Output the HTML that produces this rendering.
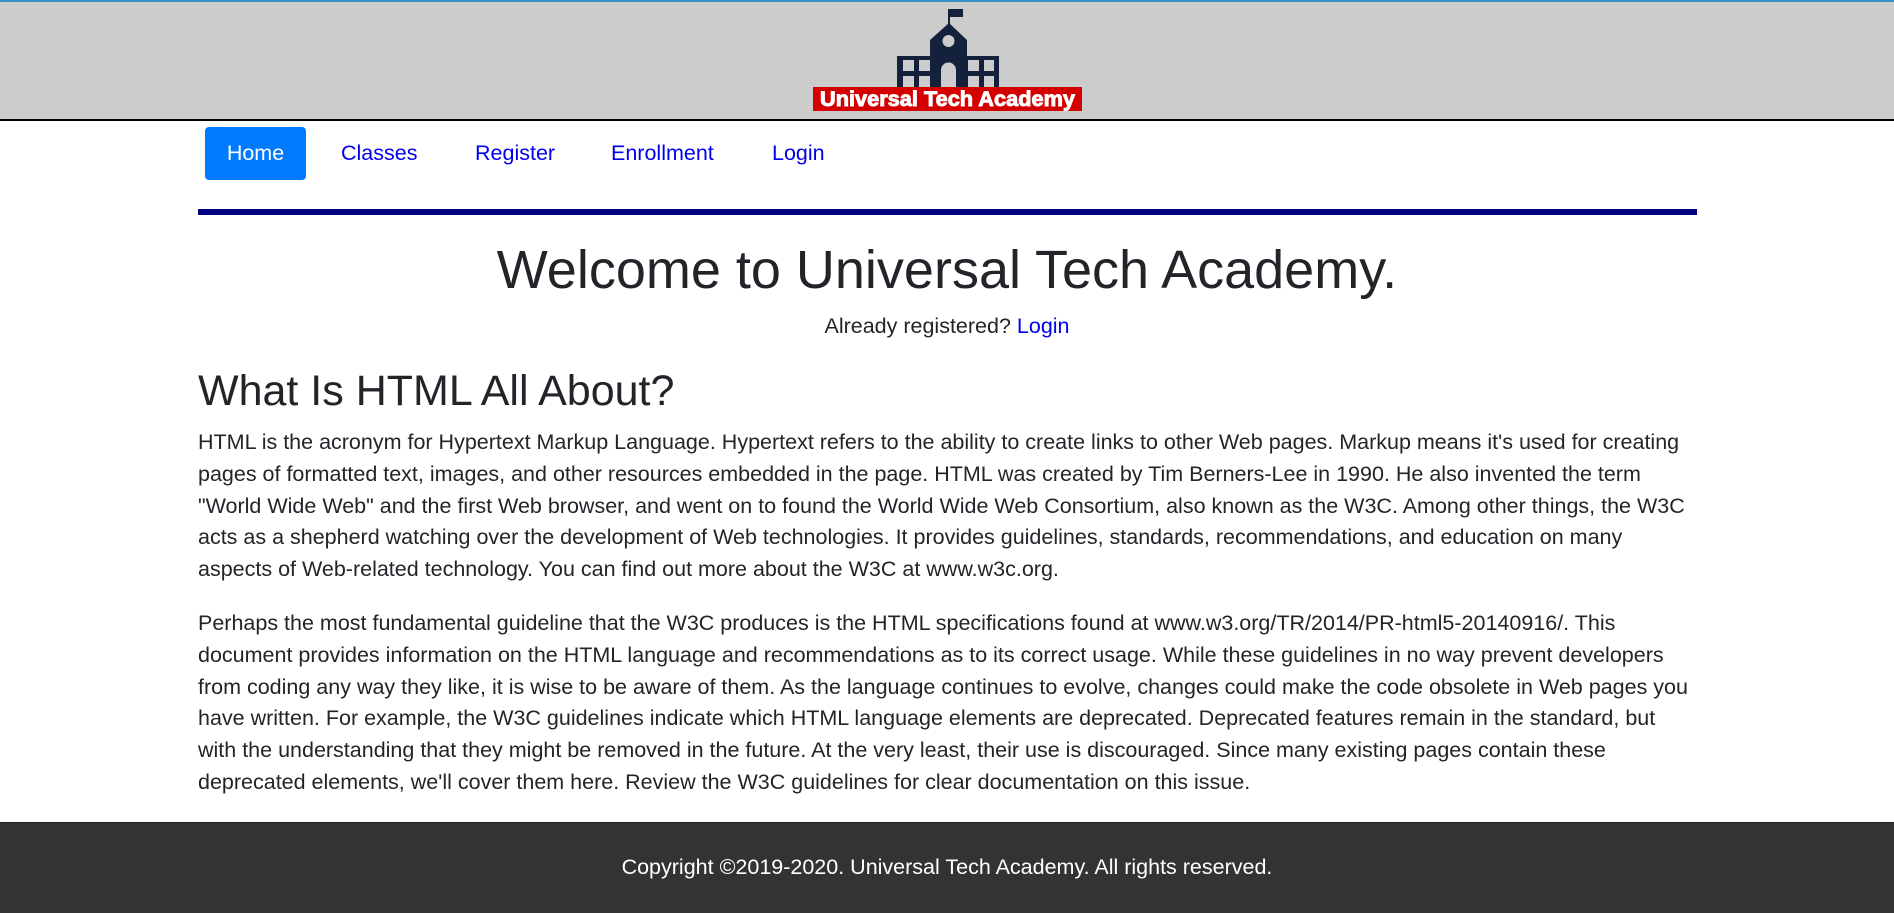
<!DOCTYPE html>
<html><head><meta charset="utf-8"><style>
*{margin:0;padding:0;box-sizing:border-box}
body{width:1894px;height:913px;overflow:hidden;font-family:"Liberation Sans",Arial,sans-serif;color:#212529;background:#fff;position:relative}
.hdr{position:absolute;left:0;top:0;width:1894px;height:121px;background:#ccc;border-top:2px solid #3a8fc4;border-bottom:2px solid #000}
.nav{position:absolute;top:127px;left:205px;height:53px}
.nav a{position:absolute;top:0;height:53px;line-height:53px;font-size:21.5px;color:#0000ee;text-decoration:none;white-space:nowrap}
.nav a.home{background:#007bff;color:#fff;border-radius:4px;width:101px;text-align:center;left:0}
.rule{position:absolute;left:198px;top:209px;width:1499px;height:6px;background:#000080}
h1{position:absolute;left:0;width:1894px;top:237px;text-align:center;font-weight:400;font-size:54px;line-height:66px}
.al{position:absolute;left:0;width:1894px;top:314px;text-align:center;font-size:21.5px}
.al a{color:#0000ee;text-decoration:none}
h2{position:absolute;left:198px;top:365px;font-weight:400;font-size:43px;line-height:52px}
.p{position:absolute;left:198px;font-size:21.5px;line-height:31.8px;white-space:nowrap}
.ft{position:absolute;left:0;top:822px;width:1894px;height:91px;background:#333;border-top:1px solid #222;color:#fff;text-align:center;font-size:21.5px;line-height:88px}
</style></head><body>
<div class="hdr"></div>
<svg style="position:absolute;left:0;top:0" width="1894" height="121">
<rect x="948" y="9" width="2" height="16" fill="#14213d"/>
<rect x="948" y="9" width="15" height="8" fill="#14213d"/>
<polygon points="930,40 949,23 967,40 967,56 999,56 999,90 897,90 897,56 930,56" fill="#14213d"/>
<circle cx="948.5" cy="41" r="6" fill="#ccc"/>
<g fill="#ccc">
<rect x="903" y="60" width="11" height="11"/><rect x="919" y="60" width="11" height="11"/>
<rect x="903" y="76" width="11" height="11"/><rect x="919" y="76" width="11" height="11"/>
<rect x="968" y="60" width="11" height="11"/><rect x="984" y="60" width="10" height="11"/>
<rect x="968" y="76" width="11" height="11"/><rect x="984" y="76" width="10" height="11"/>
<path d="M941 90 V70 A7.5 7.5 0 0 1 956 70 V90Z"/>
</g>
<rect x="813" y="87" width="269" height="24" fill="#d40000"/>
<text x="820" y="106" font-family="Liberation Sans,Arial,sans-serif" font-weight="700" font-size="21" fill="#fff" textLength="255" lengthAdjust="spacingAndGlyphs" stroke="#fff" stroke-width="0.9">Universal Tech Academy</text>
</svg>
<div class="nav">
<a class="home">Home</a>
<a style="left:136px">Classes</a>
<a style="left:270px">Register</a>
<a style="left:406px">Enrollment</a>
<a style="left:567px">Login</a>
</div>
<div class="rule"></div>
<h1>Welcome to Universal Tech Academy.</h1>
<div class="al">Already registered? <a>Login</a></div>
<h2>What Is HTML All About?</h2>
<div class="p" style="top:427px">HTML is the acronym for Hypertext Markup Language. Hypertext refers to the ability to create links to other Web pages. Markup means it's used for creating<br>pages of formatted text, images, and other resources embedded in the page. HTML was created by Tim Berners-Lee in 1990. He also invented the term<br>"World Wide Web" and the first Web browser, and went on to found the World Wide Web Consortium, also known as the W3C. Among other things, the W3C<br>acts as a shepherd watching over the development of Web technologies. It provides guidelines, standards, recommendations, and education on many<br>aspects of Web-related technology. You can find out more about the W3C at www.w3c.org.</div>
<div class="p" style="top:608px">Perhaps the most fundamental guideline that the W3C produces is the HTML specifications found at www.w3.org/TR/2014/PR-html5-20140916/. This<br>document provides information on the HTML language and recommendations as to its correct usage. While these guidelines in no way prevent developers<br>from coding any way they like, it is wise to be aware of them. As the language continues to evolve, changes could make the code obsolete in Web pages you<br>have written. For example, the W3C guidelines indicate which HTML language elements are deprecated. Deprecated features remain in the standard, but<br>with the understanding that they might be removed in the future. At the very least, their use is discouraged. Since many existing pages contain these<br>deprecated elements, we'll cover them here. Review the W3C guidelines for clear documentation on this issue.</div>
<div class="ft">Copyright ©2019-2020. Universal Tech Academy. All rights reserved.</div>
</body></html>
